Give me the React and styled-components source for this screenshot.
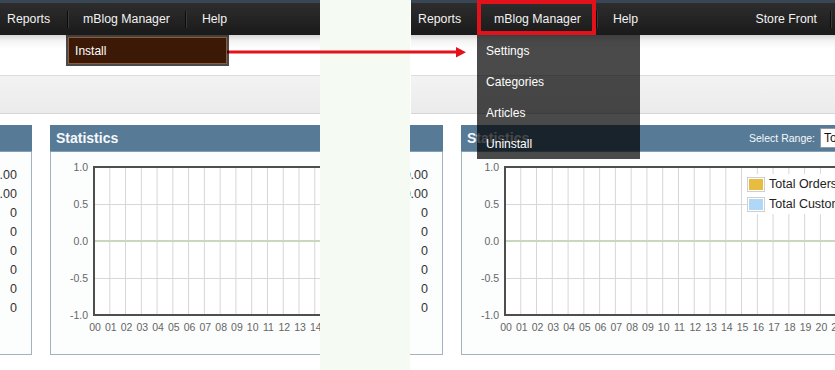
import React from "react";
import styled, { createGlobalStyle } from "styled-components";

const GlobalStyle = createGlobalStyle`
  html, body { margin: 0; padding: 0; background: #fff; }
  body { font-family: "Liberation Sans", Arial, sans-serif; }
`;

const Shot = styled.div`
  position: relative;
  display: flex;
  width: 835px;
  height: 370px;
  overflow: hidden;
`;

const Frame = styled.div`
  flex: 0 0 ${(p) => p.$width}px;
  box-sizing: border-box;
  padding-left: ${(p) => p.$shift || 0}px;
  overflow: hidden;
  background: #fff;
`;

const Gutter = styled.div`
  flex: 0 0 90px;
  background: #f5faf3;
`;

const Page = styled.div`
  width: 425px;
  height: 370px;
  background: #fff;
`;

const TopBar = styled.div`
  display: flex;
  align-items: center;
  height: 32px;
  padding: 0 5px 0 7px;
  border-top: 3px solid #394755;
  background: linear-gradient(#2d2d2d, #1a1a1a);
  color: #f2f2f2;
  font-size: 12.3px;
`;

const NavItem = styled.div`
  position: relative;
  display: flex;
  align-items: center;
  height: 100%;
  flex-shrink: 0;
  padding: 0 ${(p) => p.$pr}px 0 ${(p) => p.$pl}px;
  margin-left: ${(p) => (p.$push ? "auto" : "0")};
  white-space: nowrap;
`;

const Sep = styled.span`
  flex-shrink: 0;
  width: 1px;
  height: 17px;
  background: #0b0b0b;
  box-shadow: 1px 0 0 #3a3a3a;
`;

const Highlight = styled.span`
  position: absolute;
  top: -3px;
  left: -2px;
  right: 0;
  bottom: 0;
  border: 4px solid #e3121a;
  pointer-events: none;
`;

const Menu = styled.div`
  position: absolute;
  top: 100%;
  left: -2px;
  width: 163px;
  background: rgba(0, 0, 0, 0.71);
  z-index: 5;
`;

const MenuItem = styled.div`
  box-sizing: border-box;
  height: 31px;
  padding: 0 7px;
  border: 2px solid transparent;
  background-clip: padding-box;
  line-height: 29px;
  font-size: 12px;
  color: #fff;
  background-color: ${(p) => (p.$active ? "#3c1906" : "transparent")};
  box-shadow: ${(p) => (p.$active ? "inset 0 0 0 1px #8d5a3a" : "none")};
`;

const SubStrip = styled.div`
  height: 40px;
  background: linear-gradient(#d6d6d6 0, #f4f4f4 6px, #fff 14px);
  border-bottom: 1px solid #dcdcdc;
`;

const Band = styled.div`
  height: 37px;
  background: linear-gradient(#f3f3f3, #ebebeb);
  border-bottom: 1px solid #d6d6d6;
`;

const Content = styled.div`
  display: flex;
  align-items: flex-start;
  gap: 18px;
  padding-top: 11px;
`;

const Box = styled.div`
  flex: 0 0 ${(p) => p.$width}px;
  margin-left: ${(p) => p.$pull || 0}px;
`;

const BoxHead = styled.div`
  box-sizing: border-box;
  display: flex;
  align-items: center;
  height: 27px;
  padding: 0 5px 0 6px;
  background: #577a97;
  border-bottom: 1px solid #839db2;
  color: #f6f8fa;
  font-size: 14px;
  font-weight: bold;
`;

const BoxBody = styled.div`
  position: relative;
  box-sizing: border-box;
  height: 203px;
  border: 1px solid #a2b2c0;
  border-top: none;
  background: #fcfdfd;
`;

const Values = styled.div`
  padding: 14px 14px 0 0;
  text-align: right;
  font-size: 12.5px;
  line-height: 19px;
  color: #333;
  white-space: nowrap;
`;

const Range = styled.div`
  display: flex;
  align-items: center;
  gap: 5px;
  margin-left: auto;
  font-size: 10.5px;
  font-weight: normal;
`;

const Select = styled.div`
  box-sizing: border-box;
  width: 81px;
  height: 20px;
  padding-left: 3px;
  background: #fff;
  border: 1px solid #8e9aa4;
  color: #111;
  font-size: 12px;
  line-height: 18px;
`;

const Legend = styled.div`
  position: absolute;
  top: 22px;
  left: 285px;
  background: #fff;
`;

const LegendRow = styled.div`
  display: flex;
  align-items: center;
  gap: 4px;
  height: 20px;
  font-size: 12.5px;
  color: #222;
  white-space: nowrap;
`;

const Swatch = styled.span`
  box-sizing: border-box;
  width: 18px;
  height: 15px;
  padding: 1px;
  border: 1px solid #cfcfcf;
  background: ${(p) => p.$color};
  background-clip: content-box;
`;

const Callout = styled.svg`
  position: absolute;
  left: 0;
  top: 0;
  pointer-events: none;
`;

const STEP = 15.77;
const PX = 43;
const PY = 15;
const PW = 378;
const PH = 148;
const hours = Array.from({ length: 24 }, (_, i) => i);
const yTicks = [
  ["1.0", 0],
  ["0.5", 37],
  ["0.0", 74],
  ["-0.5", 111],
  ["-1.0", 148],
];

const Chart = () => (
  <svg width="440" height="190" style={{ display: "block" }}>
    <rect x={PX} y={PY} width={PW} height={PH} fill="#fff" />
    {hours.slice(1).map((i) => (
      <line key={i} x1={PX + STEP * i} x2={PX + STEP * i} y1={PY} y2={PY + PH} stroke="#d6d6d6" strokeWidth="1" />
    ))}
    <line x1={PX} x2={PX + PW} y1={PY + 37.5} y2={PY + 37.5} stroke="#d8d8d8" />
    <line x1={PX} x2={PX + PW} y1={PY + 111.5} y2={PY + 111.5} stroke="#d8d8d8" />
    <line x1={PX} x2={PX + PW} y1={PY + 74} y2={PY + 74} stroke="#c9d7c1" strokeWidth="2" />
    <rect x={PX} y={PY} width={PW} height={PH} fill="none" stroke="#4e4e4e" strokeWidth="2" />
    {yTicks.map(([label, off]) => (
      <text key={label} x="37" y={PY + off + 4} textAnchor="end" fontSize="10.5" fill="#666" fontFamily="Liberation Sans, Arial, sans-serif">
        {label}
      </text>
    ))}
    {hours.map((i) => (
      <text key={i} x={PX + 1 + STEP * i} y="179" textAnchor="middle" fontSize="10.5" fill="#666" fontFamily="Liberation Sans, Arial, sans-serif">
        {String(i).padStart(2, "0")}
      </text>
    ))}
  </svg>
);

const AdminPage = ({ open }) => (
  <Page>
    <TopBar>
      <NavItem $pl={0} $pr={17}>Reports</NavItem>
      <Sep />
      <NavItem $pl={15} $pr={15}>
        mBlog Manager
        {open && <Highlight />}
        <Menu>
          {open ? (
            <>
              <MenuItem>Settings</MenuItem>
              <MenuItem>Categories</MenuItem>
              <MenuItem>Articles</MenuItem>
              <MenuItem>Uninstall</MenuItem>
            </>
          ) : (
            <MenuItem $active>Install</MenuItem>
          )}
        </Menu>
      </NavItem>
      <Sep />
      <NavItem $pl={16} $pr={16}>Help</NavItem>
      <NavItem $pl={13} $pr={13} $push>Store Front</NavItem>
      <Sep />
    </TopBar>
    <SubStrip />
    <Band />
    <Content>
      <Box $width={200} $pull={-168}>
        <BoxHead />
        <BoxBody>
          <Values>
            <div>$0.00</div>
            <div>$0.00</div>
            <div>0</div>
            <div>0</div>
            <div>0</div>
            <div>0</div>
            <div>0</div>
            <div>0</div>
          </Values>
        </BoxBody>
      </Box>
      <Box $width={445}>
        <BoxHead>
          Statistics
          <Range>
            Select Range:
            <Select>Today</Select>
          </Range>
        </BoxHead>
        <BoxBody>
          <Chart />
          <Legend>
            <LegendRow>
              <Swatch $color="#e8bd3f" />
              Total Orders
            </LegendRow>
            <LegendRow>
              <Swatch $color="#b1d7f6" />
              Total Customers
            </LegendRow>
          </Legend>
        </BoxBody>
      </Box>
    </Content>
  </Page>
);

export default function App() {
  return (
    <>
      <GlobalStyle />
      <Shot>
        <Frame $width={320}>
          <AdminPage open={false} />
        </Frame>
        <Gutter />
        <Frame $width={425} $shift={1}>
          <AdminPage open />
        </Frame>
        <Callout width="835" height="370">
          <rect x="202" y="48.5" width="40" height="7" fill="#fff" />
          <rect x="204" y="50.5" width="253" height="3" fill="#e3121a" />
          <polygon points="456,47 466,52.2 456,57.5" fill="#e3121a" />
        </Callout>
      </Shot>
    </>
  );
}
